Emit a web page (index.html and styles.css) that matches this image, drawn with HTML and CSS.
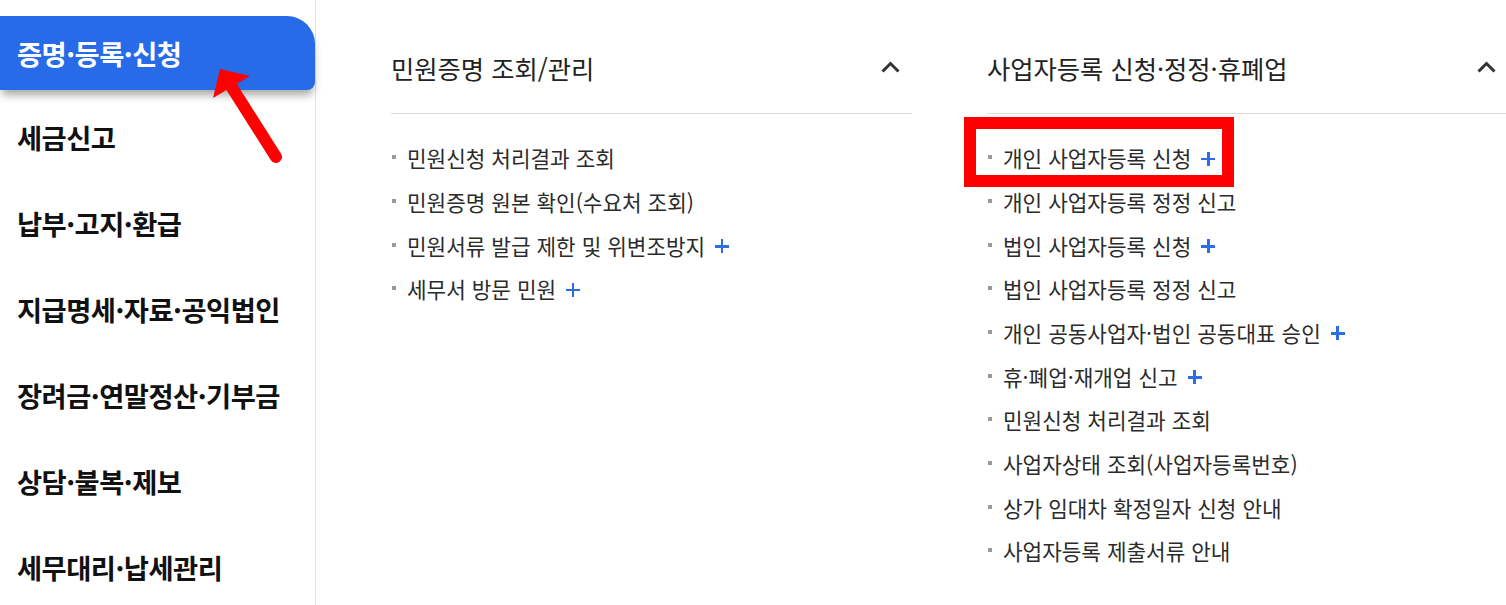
FILE: index.html
```html
<!DOCTYPE html>
<html lang="ko">
<head>
<meta charset="utf-8">
<title>증명·등록·신청</title>
<link rel="stylesheet" href="styles.css">
</head>
<body>
<div class="page">
  <nav class="sidebar">
    <ul class="side-list">
      <li class="side-item active">증명·등록·신청</li>
      <li class="side-item">세금신고</li>
      <li class="side-item">납부·고지·환급</li>
      <li class="side-item">지급명세·자료·공익법인</li>
      <li class="side-item">장려금·연말정산·기부금</li>
      <li class="side-item">상담·불복·제보</li>
      <li class="side-item">세무대리·납세관리</li>
    </ul>
  </nav>
  <main class="content">
    <section class="col">
      <div class="col-head">
        <span class="col-title">민원증명 조회/관리</span>
        <svg class="chev" width="19" height="12" viewBox="0 0 19 12"><polyline points="1.5,10.5 9.5,2.5 17.5,10.5" fill="none" stroke="#333" stroke-width="3"/></svg>
      </div>
      <ul class="links">
        <li><span class="txt">민원신청 처리결과 조회</span></li>
        <li><span class="txt">민원증명 원본 확인(수요처 조회)</span></li>
        <li><span class="txt">민원서류 발급 제한 및 위변조방지</span><span class="plus"></span></li>
        <li><span class="txt">세무서 방문 민원</span><span class="plus"></span></li>
      </ul>
    </section>
    <section class="col">
      <div class="col-head">
        <span class="col-title">사업자등록 신청·정정·휴폐업</span>
        <svg class="chev" width="19" height="12" viewBox="0 0 19 12"><polyline points="1.5,10.5 9.5,2.5 17.5,10.5" fill="none" stroke="#333" stroke-width="3"/></svg>
      </div>
      <ul class="links">
        <li class="marked"><span class="txt">개인 사업자등록 신청</span><span class="plus"></span><span class="redbox"></span></li>
        <li><span class="txt">개인 사업자등록 정정 신고</span></li>
        <li><span class="txt">법인 사업자등록 신청</span><span class="plus"></span></li>
        <li><span class="txt">법인 사업자등록 정정 신고</span></li>
        <li><span class="txt">개인 공동사업자·법인 공동대표 승인</span><span class="plus"></span></li>
        <li><span class="txt">휴·폐업·재개업 신고</span><span class="plus"></span></li>
        <li><span class="txt">민원신청 처리결과 조회</span></li>
        <li><span class="txt">사업자상태 조회(사업자등록번호)</span></li>
        <li><span class="txt">상가 임대차 확정일자 신청 안내</span></li>
        <li><span class="txt">사업자등록 제출서류 안내</span></li>
      </ul>
    </section>
  </main>
</div>
<svg class="arrow" width="300" height="180" viewBox="0 0 300 180">
  <line x1="231" y1="86" x2="276" y2="157" stroke="#ff0000" stroke-width="12" stroke-linecap="round"/>
  <polygon points="220,69 250,76 213,98" fill="#ff0000"/>
</svg>
</body>
</html>
```

FILE: styles.css
```css
* { box-sizing: border-box; }
html, body { margin: 0; padding: 0; background: #fff; overflow: hidden; }
body {
  font-family: "Noto Sans CJK KR", "Noto Sans", sans-serif;
  color: #222;
  width: 1506px;
  height: 605px;
  position: relative;
}
ul { list-style: none; margin: 0; padding: 0; }

.page { display: flex; height: 605px; }

.sidebar {
  width: 316px;
  flex: 0 0 316px;
  border-right: 1px solid #e3e3ef;
  padding-top: 16px;
}
.side-item {
  height: 86px;
  display: flex;
  align-items: center;
  padding-left: 17px;
  font-size: 27.3px;
  font-weight: 700;
  letter-spacing: -0.5px;
  color: #111;
}
.side-item.active {
  height: 74px;
  margin-bottom: 4px;
  background: #276be8;
  color: #fff;
  border-radius: 0 28px 8px 0;
  box-shadow: 0 7px 9px -2px rgba(0, 0, 0, 0.35);
  position: relative;
  z-index: 1;
}

.content {
  display: flex;
  gap: 75px;
  padding-left: 75px;
  padding-top: 23px;
}
.col { width: 521px; flex: 0 0 521px; }
.col-head {
  height: 91px;
  display: flex;
  align-items: center;
  justify-content: space-between;
  padding-right: 12px;
  padding-bottom: 1px;
  border-bottom: 1px solid #dcdcdc;
}
.col-title { font-size: 25.3px; color: #222; letter-spacing: 0; }
.chev { display: block; margin-top: -2px; }

.links { padding-top: 22px; }
.links li {
  height: 43.67px;
  display: flex;
  align-items: center;
  position: relative;
  font-size: 21.3px;
  color: #2b2b2b;
  letter-spacing: 0;
}
.links li::before {
  content: "";
  width: 4px;
  height: 4px;
  background: #999;
  margin-left: 1px;
  margin-right: 11px;
  margin-top: -1px;
  flex: 0 0 auto;
}
.plus {
  position: relative;
  width: 14px;
  height: 14px;
  margin-left: 10px;
  margin-top: 2px;
  flex: 0 0 auto;
}
.plus::before, .plus::after {
  content: "";
  position: absolute;
  background: #2c6de6;
}
.plus::before { left: 0; top: 6px; width: 14px; height: 2.5px; }
.plus::after { left: 5.75px; top: 0; width: 2.5px; height: 14px; }

.redbox {
  position: absolute;
  left: -23px;
  top: -19px;
  width: 270px;
  height: 70px;
  border: 12px solid #ff0000;
  pointer-events: none;
}

.arrow {
  position: absolute;
  left: 0;
  top: 0;
  z-index: 5;
  pointer-events: none;
}
```
